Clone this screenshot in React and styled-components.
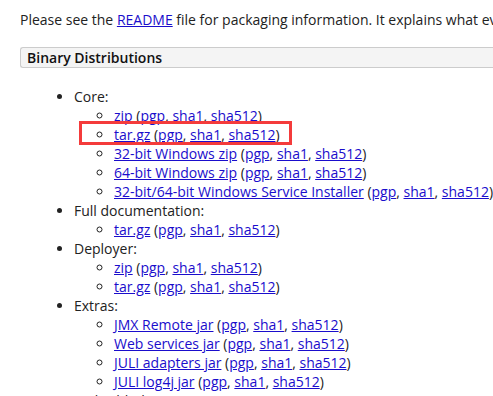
import styled, { createGlobalStyle } from 'styled-components';

const GlobalStyle = createGlobalStyle`
  body {
    margin: 0;
    background: #fff;
    font-family: 'Open Sans', 'Liberation Sans', sans-serif;
    font-size: 14px;
    line-height: 19px;
    color: #222;
    overflow: hidden;
  }
`;

const Page = styled.main`
  padding: 10px 0 0 20px;
  white-space: nowrap;
`;

const Intro = styled.p`
  margin: 0 0 18px;
`;

const Link = styled.a`
  color: #1a0dcc;
  text-decoration: underline;
`;

const SectionHeader = styled.h3`
  margin: 0;
  height: 19px;
  padding: 0 0 0 6px;
  background: #f4f4f4;
  border: 1px solid #cccccc;
  border-right: none;
  border-radius: 3px 0 0 3px;
  font-size: 14px;
  font-weight: 600;
  line-height: 19px;
  color: #111;
`;

const GroupList = styled.ul`
  margin: 19px 0 0;
  padding-left: 54px;
  list-style: disc;
`;

const FileList = styled.ul`
  margin: 0;
  padding-left: 40px;
  list-style: circle;
`;

const Highlight = styled.span`
  position: relative;

  &::after {
    content: '';
    position: absolute;
    left: -35px;
    right: -12px;
    top: -4px;
    bottom: -1px;
    border: 3px solid #f43b3b;
  }
`;

const groups = [
  {
    name: 'Core',
    files: [
      'zip',
      'tar.gz',
      '32-bit Windows zip',
      '64-bit Windows zip',
      '32-bit/64-bit Windows Service Installer',
    ],
  },
  { name: 'Full documentation', files: ['tar.gz'] },
  { name: 'Deployer', files: ['zip', 'tar.gz'] },
  {
    name: 'Extras',
    files: ['JMX Remote jar', 'Web services jar', 'JULI adapters jar', 'JULI log4j jar'],
  },
  { name: 'Embedded', files: ['tar.gz', 'zip'] },
];

function FileEntry({ label }) {
  return (
    <>
      <Link href='#'>{label}</Link> (<Link href='#'>pgp</Link>,{' '}
      <Link href='#'>sha1</Link>, <Link href='#'>sha512</Link>)
    </>
  );
}

export default function App() {
  return (
    <>
      <GlobalStyle />
      <Page>
        <Intro>
          Please see the <Link href='#'>README</Link> file for packaging information. It
          explains what every distribution contains.
        </Intro>
        <SectionHeader>Binary Distributions</SectionHeader>
        <GroupList>
          {groups.map((group) => (
            <li key={group.name}>
              {group.name}:
              <FileList>
                {group.files.map((file, i) => (
                  <li key={file}>
                    {group.name === 'Core' && i === 1 ? (
                      <Highlight>
                        <FileEntry label={file} />
                      </Highlight>
                    ) : (
                      <FileEntry label={file} />
                    )}
                  </li>
                ))}
              </FileList>
            </li>
          ))}
        </GroupList>
      </Page>
    </>
  );
}
